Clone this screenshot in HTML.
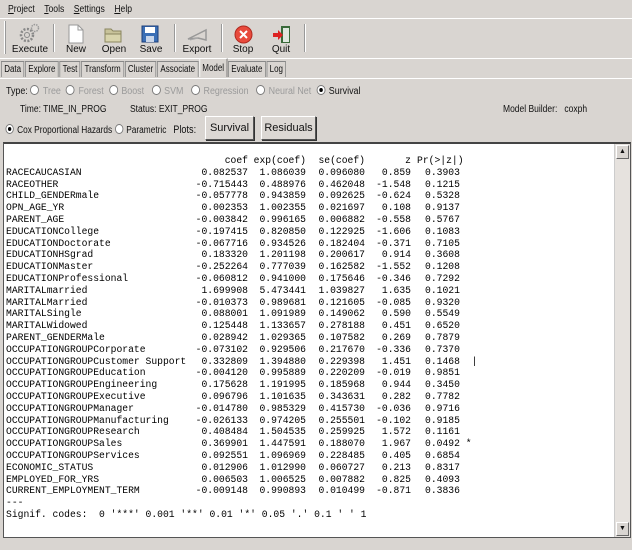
<!DOCTYPE html>
<html><head><style>
*{margin:0;padding:0;box-sizing:border-box}
body{width:632px;height:550px;background:#d9d5d1;font-family:"Liberation Sans",sans-serif;font-size:10px;color:#111;position:relative;overflow:hidden}
.a{position:absolute;white-space:nowrap}
.menu span{margin-right:11px}
.lbl{position:absolute;top:44px;font-size:10px;width:50px;text-align:center}
.sep{position:absolute;top:24px;width:2px;height:28px;border-left:1px solid #999;border-right:1px solid #fff}
.tabs{position:absolute;top:61px;left:1px;height:17px;display:flex;transform:scaleX(0.8);transform-origin:left}
.tabs div{border:1px solid #888;border-bottom:none;padding:2px 3px 0;height:16px;margin-right:1px;background:#d9d5d1}
.tabs .sel{height:19px;margin-top:-3px;border-color:#fff #666 #666 #fff;padding-top:4px}
.rad{display:inline-block;width:10px;height:10px;border-radius:50%;border:1px solid #777;background:#fff;vertical-align:-1px;margin:0 4px 0 3px;position:relative}
.rad.on::after{content:"";position:absolute;left:2px;top:2px;width:4px;height:4px;border-radius:50%;background:#000}
.dis{color:#9a9a9a}
.btn{position:absolute;top:116px;height:24px;border:1px solid #555;border-top-color:#fff;border-left-color:#fff;box-shadow:1px 1px 0 #333;background:#dcd8d4;font-size:11px;text-align:center;line-height:22px}
#ta{position:absolute;left:3px;top:142px;width:628px;height:396px;background:#fff;border:1px solid #555;border-top:2px solid #444}
#sb{position:absolute;right:0;top:0;width:16px;height:100%;background:#e6e2de;border-left:1px solid #ccc}
.ar{position:absolute;left:1px;width:13px;height:14px;background:#d9d5d1;border:1px solid #fff;border-right-color:#666;border-bottom-color:#666;font-size:7px;text-align:center;line-height:12px}
table{position:absolute;left:2px;top:11px;border-collapse:collapse;font-family:"Liberation Mono",monospace;font-size:9.7px;table-layout:fixed;color:#000}
td{height:11.8px;padding:0;white-space:pre;line-height:11.8px}
td.n{width:184px}td.c{width:58px;text-align:right}td.e{width:58px;text-align:right}td.s{width:59px;text-align:right}td.z{width:46px;text-align:right}td.p{width:60px;padding-left:14px}
</style></head><body>
<div class="a menu" style="left:8px;top:4px;font-size:10px;transform:scaleX(0.86);transform-origin:left"><span><u>P</u>roject</span><span><u>T</u>ools</span><span><u>S</u>ettings</span><span><u>H</u>elp</span></div>
<div class="a" style="left:0;top:18px;width:632px;border-top:1px solid #fff"></div>
<div class="a" style="left:4px;top:21px;width:2px;height:33px;border-left:1px solid #fff;border-right:1px solid #999"></div>
<svg class="a" style="left:18px;top:23px" width="22" height="20"><circle cx="9" cy="12" r="6" fill="none" stroke="#888" stroke-width="2.5" stroke-dasharray="2 1.5"/><circle cx="9" cy="12" r="2.5" fill="none" stroke="#888"/><circle cx="17" cy="5" r="3.5" fill="none" stroke="#999" stroke-width="1.5" stroke-dasharray="1.5 1"/></svg>
<svg class="a" style="left:68px;top:24px" width="16" height="20"><path d="M1 1h9l5 5v13H1z" fill="#fff" stroke="#999"/><path d="M10 1v5h5" fill="none" stroke="#999"/></svg>
<svg class="a" style="left:104px;top:27px" width="20" height="16"><path d="M1 2h6l2 2h8v11H1z" fill="#c8c39a" stroke="#8a8660"/><path d="M1 7h16v8H1z" fill="#d8d4ac" stroke="#8a8660"/></svg>
<svg class="a" style="left:141px;top:25px" width="18" height="18"><rect x="1" y="1" width="16" height="16" fill="#3b6fb6" stroke="#1d3f7a"/><rect x="4" y="2" width="10" height="6" fill="#fff"/><rect x="5" y="11" width="8" height="6" fill="#c9d6ea"/></svg>
<svg class="a" style="left:186px;top:27px" width="22" height="16"><path d="M2 12l10-5 8-4v10l-8-2z" fill="none" stroke="#999" stroke-width="1.5"/><path d="M4 13l8-2" stroke="#aaa"/></svg>
<svg class="a" style="left:234px;top:25px" width="19" height="19"><circle cx="9.5" cy="9.5" r="8.5" fill="#e84a3c" stroke="#b02a20"/><path d="M6 6l7 7M13 6l-7 7" stroke="#fff" stroke-width="2"/></svg>
<svg class="a" style="left:272px;top:25px" width="20" height="19"><rect x="9" y="1" width="9" height="17" fill="#3a6a3a"/><rect x="11" y="3" width="6" height="14" fill="#dfe8df"/><path d="M1 8h5V5l5 5-5 5v-3H1z" fill="#d22"/></svg>
<div class="lbl" style="left:5px">Execute</div>
<div class="lbl" style="left:51px">New</div>
<div class="lbl" style="left:89px">Open</div>
<div class="lbl" style="left:126px">Save</div>
<div class="lbl" style="left:172px">Export</div>
<div class="lbl" style="left:218px">Stop</div>
<div class="lbl" style="left:256px">Quit</div>
<div class="sep" style="left:53px"></div><div class="sep" style="left:174px"></div><div class="sep" style="left:221px"></div><div class="sep" style="left:304px"></div>
<div class="a" style="left:0;top:58px;width:632px;border-top:1px solid #fff"></div>
<div class="tabs"><div>Data</div><div>Explore</div><div>Test</div><div>Transform</div><div>Cluster</div><div>Associate</div><div class="sel">Model</div><div>Evaluate</div><div>Log</div></div>
<div class="a" style="left:0;top:78px;width:632px;border-top:1px solid #fff"></div>
<div class="a" style="left:6px;top:85px;transform:scaleX(0.89);transform-origin:left">Type:<span class="rad"></span><span class="dis">Tree</span> <span class="rad"></span><span class="dis">Forest</span> <span class="rad"></span><span class="dis">Boost</span>&nbsp; <span class="rad"></span><span class="dis">SVM</span>&nbsp; <span class="rad"></span><span class="dis">Regression</span>&nbsp; <span class="rad"></span><span class="dis">Neural Net</span> <span class="rad on"></span>Survival</div>
<div class="a" style="left:20px;top:104px;transform:scaleX(0.85);transform-origin:left">Time: TIME_IN_PROG</div>
<div class="a" style="left:130px;top:104px;transform:scaleX(0.85);transform-origin:left">Status: EXIT_PROG</div>
<div class="a" style="left:503px;top:104px;transform:scaleX(0.85);transform-origin:left">Model Builder: &nbsp; coxph</div>
<div class="a" style="left:3px;top:124px;transform:scaleX(0.83);transform-origin:left"><span class="rad on"></span>Cox Proportional Hazards<span class="rad"></span>Parametric &nbsp;&nbsp;<span style="font-size:11px">Plots:</span></div>
<div class="btn" style="left:205px;width:49px">Survival</div>
<div class="btn" style="left:261px;width:55px">Residuals</div>
<div id="ta">
<table>
<tr><td class="n"></td><td class="c">coef</td><td class="e">exp(coef)</td><td class="s">se(coef)</td><td class="z">z</td><td class="p" style="padding-left:6px">Pr(&gt;|z|)</td></tr>
<tr><td class="n">RACECAUCASIAN</td><td class="c">0.082537</td><td class="e">1.086039</td><td class="s">0.096080</td><td class="z">0.859</td><td class="p">0.3903</td></tr>
<tr><td class="n">RACEOTHER</td><td class="c">-0.715443</td><td class="e">0.488976</td><td class="s">0.462048</td><td class="z">-1.548</td><td class="p">0.1215</td></tr>
<tr><td class="n">CHILD_GENDERmale</td><td class="c">-0.057778</td><td class="e">0.943859</td><td class="s">0.092625</td><td class="z">-0.624</td><td class="p">0.5328</td></tr>
<tr><td class="n">OPN_AGE_YR</td><td class="c">0.002353</td><td class="e">1.002355</td><td class="s">0.021697</td><td class="z">0.108</td><td class="p">0.9137</td></tr>
<tr><td class="n">PARENT_AGE</td><td class="c">-0.003842</td><td class="e">0.996165</td><td class="s">0.006882</td><td class="z">-0.558</td><td class="p">0.5767</td></tr>
<tr><td class="n">EDUCATIONCollege</td><td class="c">-0.197415</td><td class="e">0.820850</td><td class="s">0.122925</td><td class="z">-1.606</td><td class="p">0.1083</td></tr>
<tr><td class="n">EDUCATIONDoctorate</td><td class="c">-0.067716</td><td class="e">0.934526</td><td class="s">0.182404</td><td class="z">-0.371</td><td class="p">0.7105</td></tr>
<tr><td class="n">EDUCATIONHSgrad</td><td class="c">0.183320</td><td class="e">1.201198</td><td class="s">0.200617</td><td class="z">0.914</td><td class="p">0.3608</td></tr>
<tr><td class="n">EDUCATIONMaster</td><td class="c">-0.252264</td><td class="e">0.777039</td><td class="s">0.162582</td><td class="z">-1.552</td><td class="p">0.1208</td></tr>
<tr><td class="n">EDUCATIONProfessional</td><td class="c">-0.060812</td><td class="e">0.941000</td><td class="s">0.175646</td><td class="z">-0.346</td><td class="p">0.7292</td></tr>
<tr><td class="n">MARITALmarried</td><td class="c">1.699908</td><td class="e">5.473441</td><td class="s">1.039827</td><td class="z">1.635</td><td class="p">0.1021</td></tr>
<tr><td class="n">MARITALMarried</td><td class="c">-0.010373</td><td class="e">0.989681</td><td class="s">0.121605</td><td class="z">-0.085</td><td class="p">0.9320</td></tr>
<tr><td class="n">MARITALSingle</td><td class="c">0.088001</td><td class="e">1.091989</td><td class="s">0.149062</td><td class="z">0.590</td><td class="p">0.5549</td></tr>
<tr><td class="n">MARITALWidowed</td><td class="c">0.125448</td><td class="e">1.133657</td><td class="s">0.278188</td><td class="z">0.451</td><td class="p">0.6520</td></tr>
<tr><td class="n">PARENT_GENDERMale</td><td class="c">0.028942</td><td class="e">1.029365</td><td class="s">0.107582</td><td class="z">0.269</td><td class="p">0.7879</td></tr>
<tr><td class="n">OCCUPATIONGROUPCorporate</td><td class="c">-0.073102</td><td class="e">0.929506</td><td class="s">0.217670</td><td class="z">-0.336</td><td class="p">0.7370</td></tr>
<tr><td class="n">OCCUPATIONGROUPCustomer Support</td><td class="c">0.332809</td><td class="e">1.394880</td><td class="s">0.229398</td><td class="z">1.451</td><td class="p">0.1468 &nbsp;|</td></tr>
<tr><td class="n">OCCUPATIONGROUPEducation</td><td class="c">-0.004120</td><td class="e">0.995889</td><td class="s">0.220209</td><td class="z">-0.019</td><td class="p">0.9851</td></tr>
<tr><td class="n">OCCUPATIONGROUPEngineering</td><td class="c">0.175628</td><td class="e">1.191995</td><td class="s">0.185968</td><td class="z">0.944</td><td class="p">0.3450</td></tr>
<tr><td class="n">OCCUPATIONGROUPExecutive</td><td class="c">0.096796</td><td class="e">1.101635</td><td class="s">0.343631</td><td class="z">0.282</td><td class="p">0.7782</td></tr>
<tr><td class="n">OCCUPATIONGROUPManager</td><td class="c">-0.014780</td><td class="e">0.985329</td><td class="s">0.415730</td><td class="z">-0.036</td><td class="p">0.9716</td></tr>
<tr><td class="n">OCCUPATIONGROUPManufacturing</td><td class="c">-0.026133</td><td class="e">0.974205</td><td class="s">0.255501</td><td class="z">-0.102</td><td class="p">0.9185</td></tr>
<tr><td class="n">OCCUPATIONGROUPResearch</td><td class="c">0.408484</td><td class="e">1.504535</td><td class="s">0.259925</td><td class="z">1.572</td><td class="p">0.1161</td></tr>
<tr><td class="n">OCCUPATIONGROUPSales</td><td class="c">0.369901</td><td class="e">1.447591</td><td class="s">0.188070</td><td class="z">1.967</td><td class="p">0.0492 *</td></tr>
<tr><td class="n">OCCUPATIONGROUPServices</td><td class="c">0.092551</td><td class="e">1.096969</td><td class="s">0.228485</td><td class="z">0.405</td><td class="p">0.6854</td></tr>
<tr><td class="n">ECONOMIC_STATUS</td><td class="c">0.012906</td><td class="e">1.012990</td><td class="s">0.060727</td><td class="z">0.213</td><td class="p">0.8317</td></tr>
<tr><td class="n">EMPLOYED_FOR_YRS</td><td class="c">0.006503</td><td class="e">1.006525</td><td class="s">0.007882</td><td class="z">0.825</td><td class="p">0.4093</td></tr>
<tr><td class="n">CURRENT_EMPLOYMENT_TERM</td><td class="c">-0.009148</td><td class="e">0.990893</td><td class="s">0.010499</td><td class="z">-0.871</td><td class="p">0.3836</td></tr>
<tr><td class="n">---</td></tr>
<tr><td colspan="6">Signif. codes:  0 '***' 0.001 '**' 0.01 '*' 0.05 '.' 0.1 ' ' 1</td></tr>
</table>
<div id="sb"><div class="ar" style="top:1px">▲</div><div class="ar" style="bottom:1px">▼</div></div>
</div>
</body></html>
